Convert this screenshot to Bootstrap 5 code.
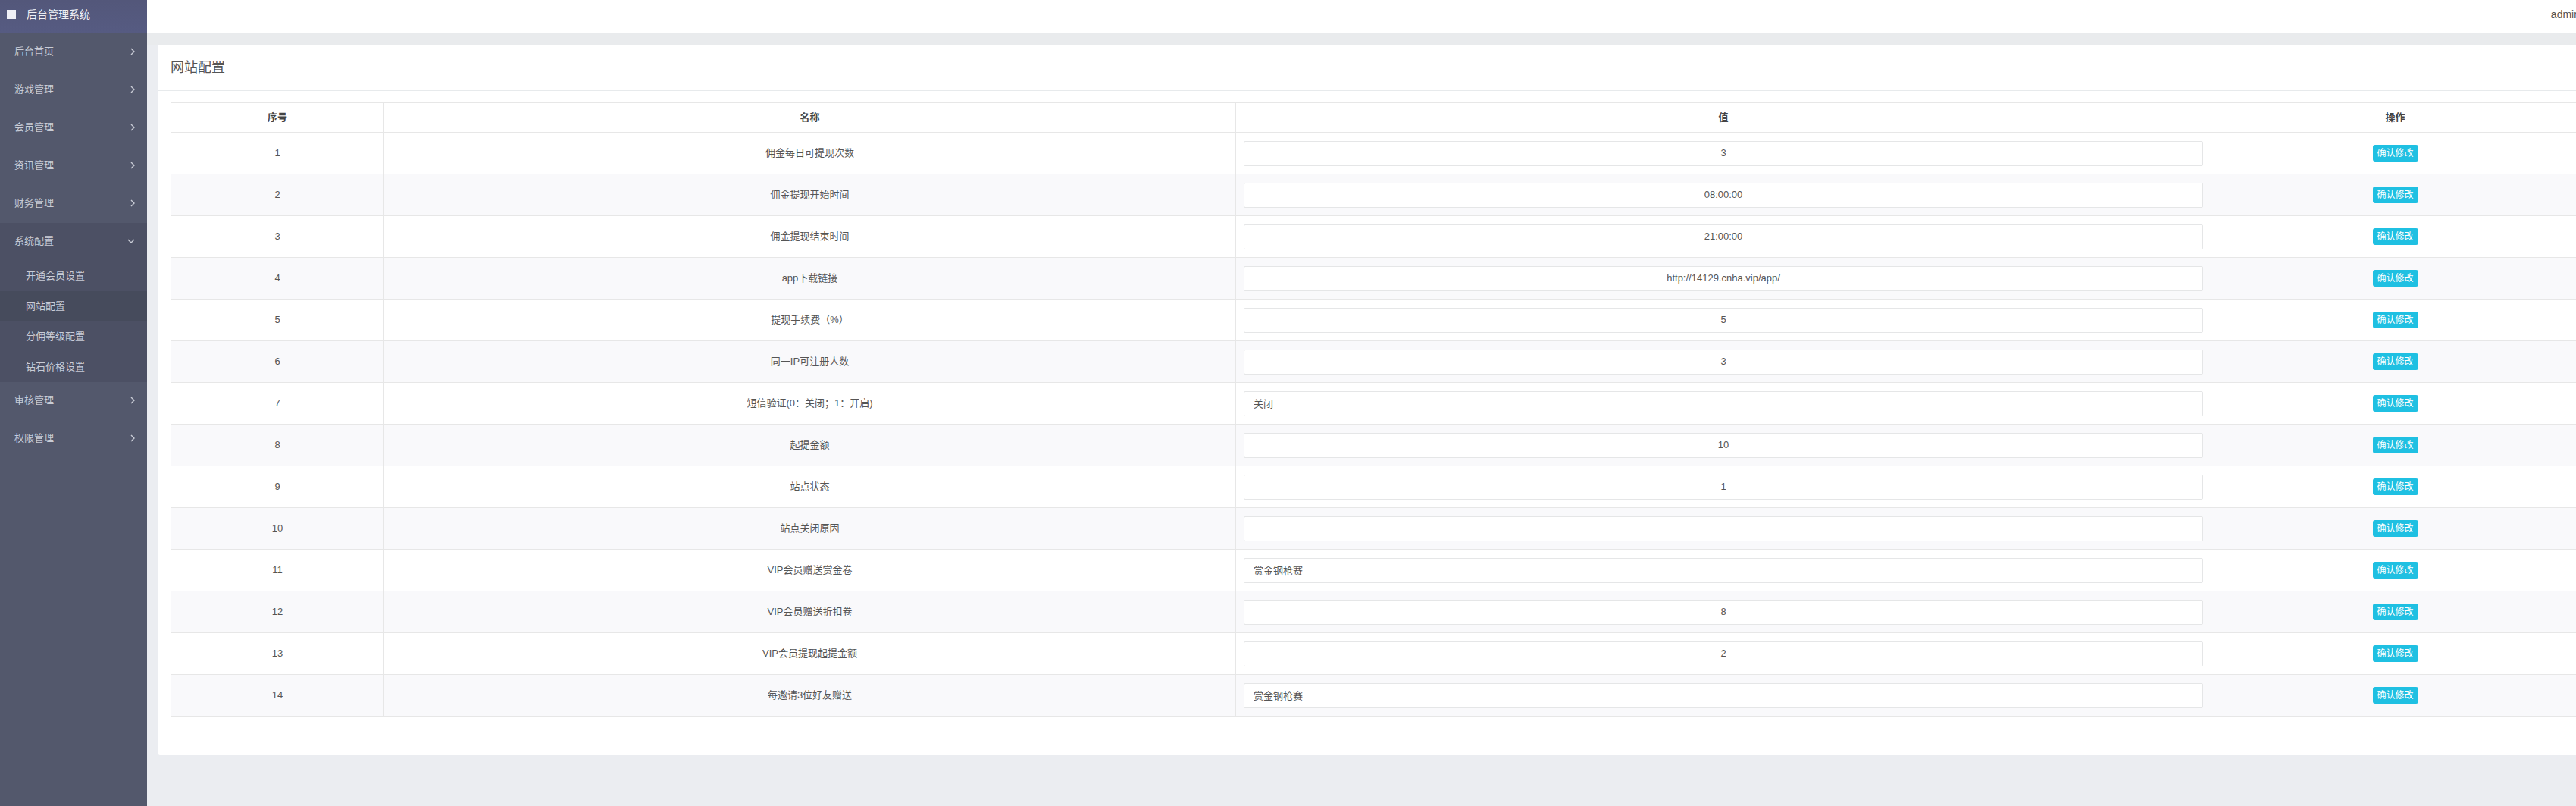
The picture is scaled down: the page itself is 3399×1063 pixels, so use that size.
<!DOCTYPE html>
<html lang="zh-CN">
<head>
<meta charset="utf-8">
<title>后台管理系统</title>
<link rel="stylesheet" href="https://cdn.jsdelivr.net/npm/bootstrap@5.3.0/dist/css/bootstrap.min.css">
<style>
html, body { height: 1063px; overflow: hidden; }
body { font-family: "Liberation Sans", "Noto Sans CJK SC", sans-serif; font-size: 13px; color: #555; background: #ebedf1; }
.side-rail { width: 194px; height: 1063px; background: #53586c; flex-shrink: 0; }
.rail-head { height: 44px; padding: 0 0 6px 9px; background: linear-gradient(#53577a, #565b82); color: #eef0f6; font-size: 14px; gap: 14px; }
.rail-square { width: 12px; height: 12px; background: #eeeff6; }
.rail-link { height: 50px; padding: 0 16px 2px 19px; color: #c9ccd6; font-size: 13px; text-decoration: none; }
.rail-link:hover { color: #fff; }
.rail-open { background: #4c5064; }
.rail-sub { height: 40px; padding: 0 0 1px 34px; color: #c9ccd6; font-size: 13px; text-decoration: none; }
.rail-sub.is-current { background: #464b5c; }
.main-pane { width: 3240px; flex-shrink: 0; }
.top-strip { height: 44px; padding: 0 30px 6px 0; background: #fff; color: #555; font-size: 14px; }
.page-pad { padding: 15px; background: linear-gradient(#e9ebed 15px, #ebedf1 15px); }
.cfg-card { border: 0; border-radius: 2px; }
.cfg-head { height: 61px; padding: 0 16px; background: #fff; border-bottom: 1px solid #e7eaec; color: #555; font-size: 18px; }
.cfg-body { padding: 15px 16px 51px; }
.cfg-table { table-layout: fixed; width: 3178px; margin: 0; font-size: 13px; --bs-table-color: #555; --bs-table-border-color: #e7e7e7; }
.cfg-table th { height: 39px; padding: 0; color: #444; text-align: center; vertical-align: middle; font-size: 13px; }
.cfg-table td { height: 55px; padding: 10px; text-align: center; vertical-align: middle; }
.cfg-table tbody tr:nth-child(even) td { --bs-table-bg: #f9f9fb; }
.cfg-input { height: 33px; min-height: 0; padding: 0 12px 2px; border-color: #e5e6e7; border-radius: 2px; color: #555; font-size: 13px; line-height: 27px; }
.cfg-btn { width: 60px; height: 22px; padding: 0; border: 0; border-radius: 3px; background: #1fc0e2; color: #fff; font-size: 12px; line-height: 22px; }
.col-num { width: 281px; }
.col-name { width: 1124px; }
.col-val { width: 1287px; }
.col-act { width: 486px; }
</style>
</head>
<body class="d-flex">
<aside class="side-rail d-flex flex-column">
  <div class="rail-head d-flex align-items-center"><span class="rail-square"></span><span>后台管理系统</span></div>
  <nav class="d-flex flex-column">
    <a href="#" class="rail-link d-flex align-items-center justify-content-between">后台首页<svg width="6" height="10" viewBox="0 0 6 10"><path d="M1 1l4 4-4 4" fill="none" stroke="#c9ccd6" stroke-width="1.4"/></svg></a>
    <a href="#" class="rail-link d-flex align-items-center justify-content-between">游戏管理<svg width="6" height="10" viewBox="0 0 6 10"><path d="M1 1l4 4-4 4" fill="none" stroke="#c9ccd6" stroke-width="1.4"/></svg></a>
    <a href="#" class="rail-link d-flex align-items-center justify-content-between">会员管理<svg width="6" height="10" viewBox="0 0 6 10"><path d="M1 1l4 4-4 4" fill="none" stroke="#c9ccd6" stroke-width="1.4"/></svg></a>
    <a href="#" class="rail-link d-flex align-items-center justify-content-between">资讯管理<svg width="6" height="10" viewBox="0 0 6 10"><path d="M1 1l4 4-4 4" fill="none" stroke="#c9ccd6" stroke-width="1.4"/></svg></a>
    <a href="#" class="rail-link d-flex align-items-center justify-content-between">财务管理<svg width="6" height="10" viewBox="0 0 6 10"><path d="M1 1l4 4-4 4" fill="none" stroke="#c9ccd6" stroke-width="1.4"/></svg></a>
    <div class="rail-open d-flex flex-column">
      <a href="#" class="rail-link d-flex align-items-center justify-content-between">系统配置<svg width="10" height="6" viewBox="0 0 10 6"><path d="M1 1l4 4 4-4" fill="none" stroke="#c9ccd6" stroke-width="1.4"/></svg></a>
      <a href="#" class="rail-sub d-flex align-items-center">开通会员设置</a>
      <a href="#" class="rail-sub is-current d-flex align-items-center">网站配置</a>
      <a href="#" class="rail-sub d-flex align-items-center">分佣等级配置</a>
      <a href="#" class="rail-sub d-flex align-items-center">钻石价格设置</a>
    </div>
    <a href="#" class="rail-link d-flex align-items-center justify-content-between">审核管理<svg width="6" height="10" viewBox="0 0 6 10"><path d="M1 1l4 4-4 4" fill="none" stroke="#c9ccd6" stroke-width="1.4"/></svg></a>
    <a href="#" class="rail-link d-flex align-items-center justify-content-between">权限管理<svg width="6" height="10" viewBox="0 0 6 10"><path d="M1 1l4 4-4 4" fill="none" stroke="#c9ccd6" stroke-width="1.4"/></svg></a>
  </nav>
</aside>
<div class="main-pane">
  <header class="top-strip d-flex align-items-center justify-content-end">admin</header>
  <div class="page-pad">
    <div class="card cfg-card">
      <div class="cfg-head d-flex align-items-center">网站配置</div>
      <div class="cfg-body">
        <table class="table table-bordered cfg-table">
          <thead>
            <tr><th class="col-num">序号</th><th class="col-name">名称</th><th class="col-val">值</th><th class="col-act">操作</th></tr>
          </thead>
          <tbody>
            <tr><td>1</td><td>佣金每日可提现次数</td><td><input class="form-control cfg-input text-center" value="3"></td><td><button class="btn cfg-btn">确认修改</button></td></tr>
            <tr><td>2</td><td>佣金提现开始时间</td><td><input class="form-control cfg-input text-center" value="08:00:00"></td><td><button class="btn cfg-btn">确认修改</button></td></tr>
            <tr><td>3</td><td>佣金提现结束时间</td><td><input class="form-control cfg-input text-center" value="21:00:00"></td><td><button class="btn cfg-btn">确认修改</button></td></tr>
            <tr><td>4</td><td>app下载链接</td><td><input class="form-control cfg-input text-center" value="http://14129.cnha.vip/app/"></td><td><button class="btn cfg-btn">确认修改</button></td></tr>
            <tr><td>5</td><td>提现手续费（%）</td><td><input class="form-control cfg-input text-center" value="5"></td><td><button class="btn cfg-btn">确认修改</button></td></tr>
            <tr><td>6</td><td>同一IP可注册人数</td><td><input class="form-control cfg-input text-center" value="3"></td><td><button class="btn cfg-btn">确认修改</button></td></tr>
            <tr><td>7</td><td>短信验证(0：关闭；1：开启)</td><td><input class="form-control cfg-input" value="关闭"></td><td><button class="btn cfg-btn">确认修改</button></td></tr>
            <tr><td>8</td><td>起提金额</td><td><input class="form-control cfg-input text-center" value="10"></td><td><button class="btn cfg-btn">确认修改</button></td></tr>
            <tr><td>9</td><td>站点状态</td><td><input class="form-control cfg-input text-center" value="1"></td><td><button class="btn cfg-btn">确认修改</button></td></tr>
            <tr><td>10</td><td>站点关闭原因</td><td><input class="form-control cfg-input text-center" value=""></td><td><button class="btn cfg-btn">确认修改</button></td></tr>
            <tr><td>11</td><td>VIP会员赠送赏金卷</td><td><input class="form-control cfg-input" value="赏金钢枪赛"></td><td><button class="btn cfg-btn">确认修改</button></td></tr>
            <tr><td>12</td><td>VIP会员赠送折扣卷</td><td><input class="form-control cfg-input text-center" value="8"></td><td><button class="btn cfg-btn">确认修改</button></td></tr>
            <tr><td>13</td><td>VIP会员提现起提金额</td><td><input class="form-control cfg-input text-center" value="2"></td><td><button class="btn cfg-btn">确认修改</button></td></tr>
            <tr><td>14</td><td>每邀请3位好友赠送</td><td><input class="form-control cfg-input" value="赏金钢枪赛"></td><td><button class="btn cfg-btn">确认修改</button></td></tr>
          </tbody>
        </table>
      </div>
    </div>
  </div>
</div>
<script src="https://cdn.jsdelivr.net/npm/bootstrap@5.3.0/dist/js/bootstrap.bundle.min.js"></script>
</body>
</html>
